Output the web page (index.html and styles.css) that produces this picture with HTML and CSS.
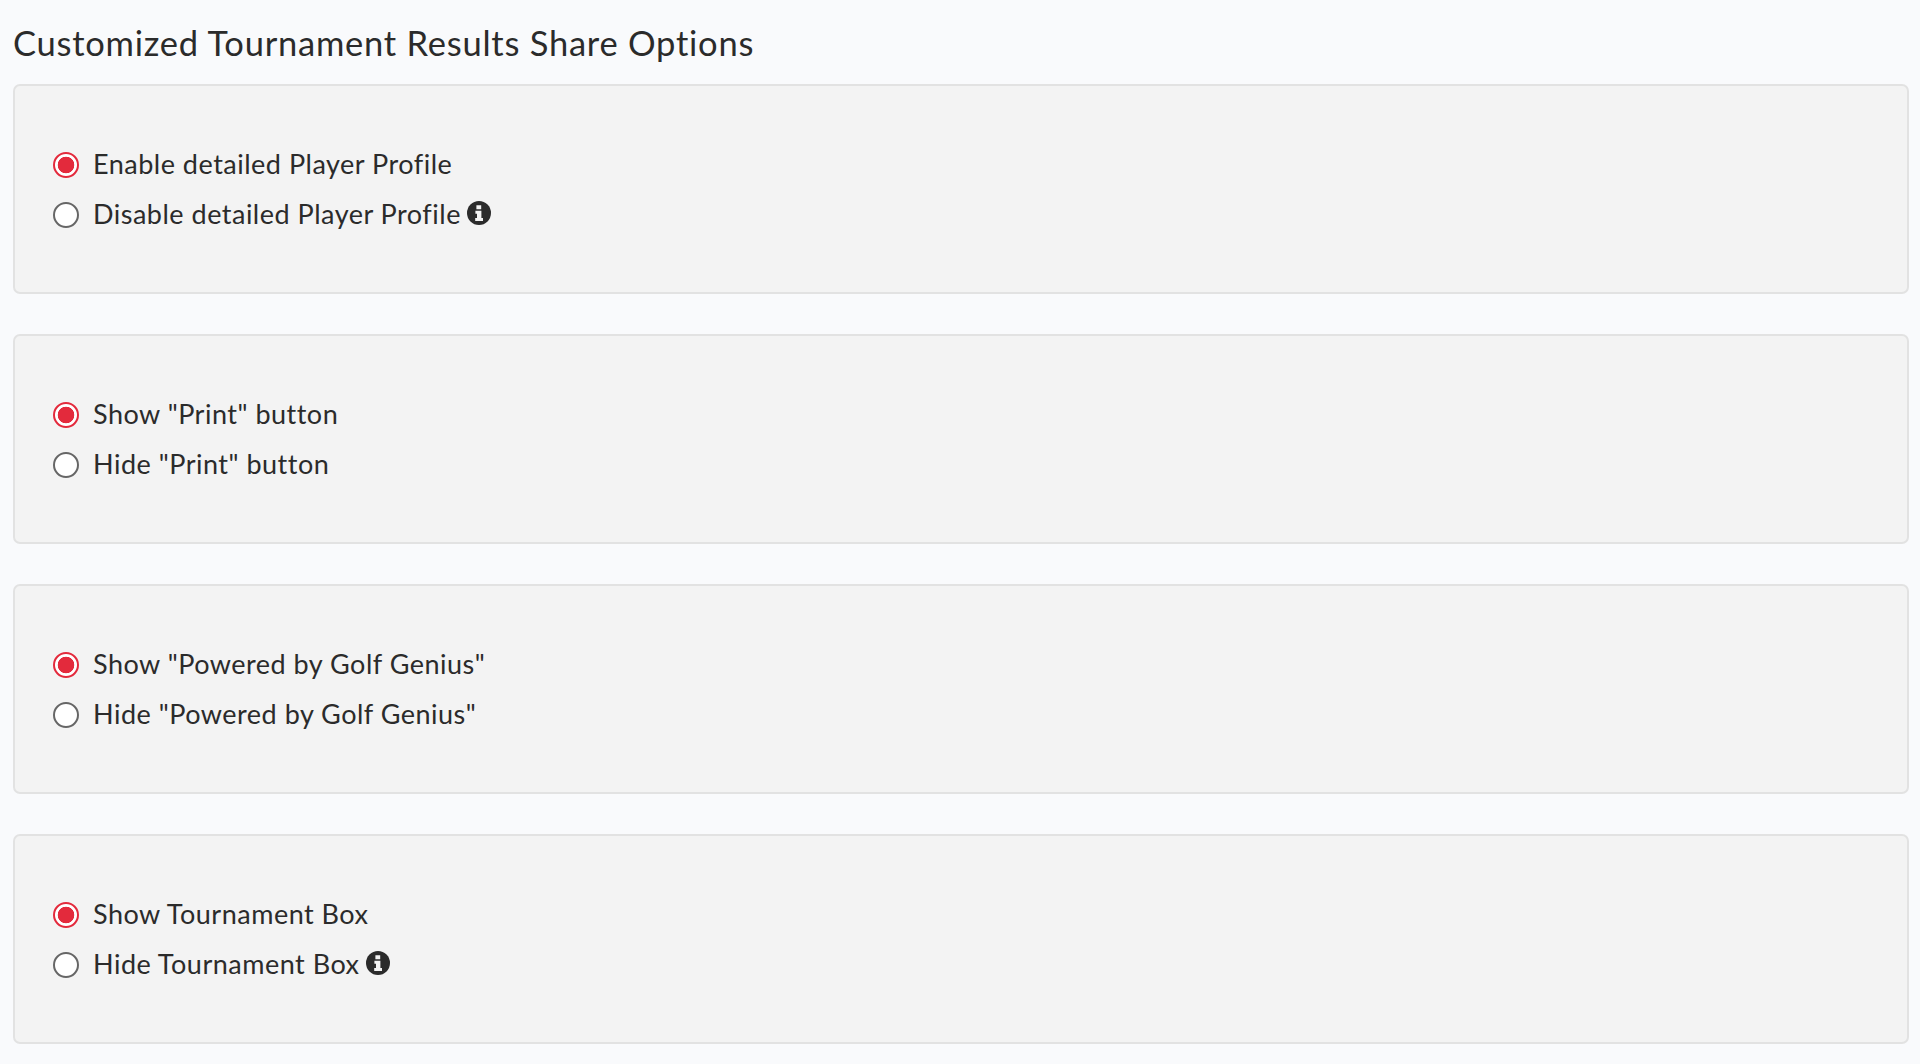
FILE: index.html
```html
<!DOCTYPE html>
<html lang="en">
<head>
<meta charset="utf-8">
<title>Customized Tournament Results Share Options</title>
<link rel="stylesheet" href="styles.css">
</head>
<body>
<main class="page">
  <h1 class="title">Customized Tournament Results Share Options</h1>
  <section class="box">
    <label class="opt"><span class="radio on"></span><span class="txt">Enable detailed Player Profile</span></label>
    <label class="opt"><span class="radio"></span><span class="txt">Disable detailed Player Profile</span>
      <svg class="info" viewBox="0 0 24 24"><circle cx="12" cy="12" r="12" fill="#2b2b2b"/><path fill="#f3f3f3" d="M9.4 4.2h4.8v4H9.4zM8.4 9.8h6v7.2h1.6v3H8.2v-3h1.8v-4.2H8.4z"/></svg></label>
  </section>
  <section class="box">
    <label class="opt"><span class="radio on"></span><span class="txt">Show "Print" button</span></label>
    <label class="opt"><span class="radio"></span><span class="txt">Hide "Print" button</span></label>
  </section>
  <section class="box">
    <label class="opt"><span class="radio on"></span><span class="txt">Show "Powered by Golf Genius"</span></label>
    <label class="opt"><span class="radio"></span><span class="txt">Hide "Powered by Golf Genius"</span></label>
  </section>
  <section class="box">
    <label class="opt"><span class="radio on"></span><span class="txt">Show Tournament Box</span></label>
    <label class="opt"><span class="radio"></span><span class="txt">Hide Tournament Box</span>
      <svg class="info" viewBox="0 0 24 24"><circle cx="12" cy="12" r="12" fill="#2b2b2b"/><path fill="#f3f3f3" d="M9.4 4.2h4.8v4H9.4zM8.4 9.8h6v7.2h1.6v3H8.2v-3h1.8v-4.2H8.4z"/></svg></label>
  </section>
</main>
</body>
</html>
```
FILE: styles.css
```css
html, body { margin: 0; padding: 0; }
body {
  background: #f9fafc;
  color: #2b2b2b;
  font-family: "Lato", "Liberation Sans", sans-serif;
  height: 1064px;
  overflow: hidden;
}
.page { padding: 22px 11px 0 13px; }
.title {
  margin: 0 0 20px;
  font-size: 34.5px;
  letter-spacing: 0.76px;
  line-height: 42px;
  font-weight: 400;
}
.box {
  box-sizing: border-box;
  height: 210px;
  margin-bottom: 40px;
  padding: 54px 38px 0;
  background: #f3f3f3;
  border: 2px solid #e2e2e2;
  border-radius: 7px;
}
.opt {
  display: flex;
  align-items: center;
  height: 50px;
  font-size: 27px;
  letter-spacing: 0.5px;
}
.txt { padding-bottom: 3px; }
.radio {
  box-sizing: border-box;
  flex: none;
  width: 26px;
  height: 26px;
  margin-right: 14px;
  border: 2px solid #666;
  border-radius: 50%;
  background: #fff;
}
.radio.on {
  border-color: #e32a3c;
  background: radial-gradient(circle, #e32a3c 0 8px, #fff 8.6px);
}
.info { width: 24px; height: 24px; margin: -5px 0 0 6px; flex: none; }
```
